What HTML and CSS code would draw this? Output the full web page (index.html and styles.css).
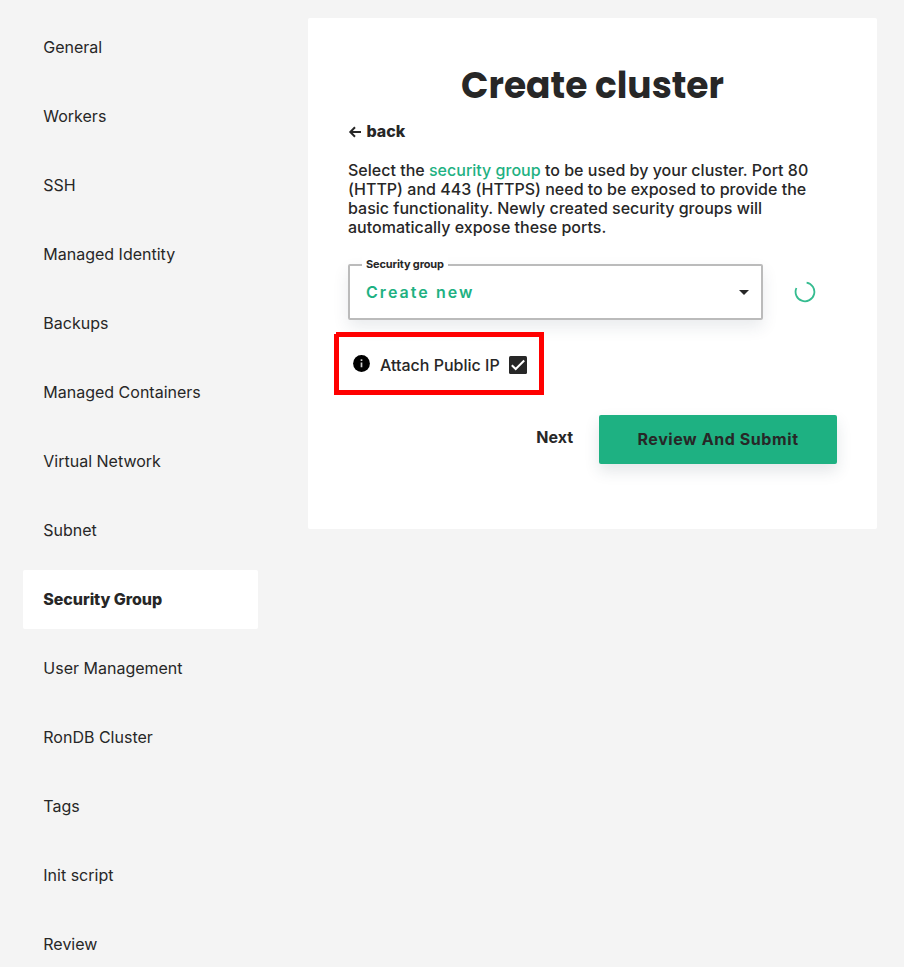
FILE: index.html
```html
<!DOCTYPE html>
<html lang="en">
<head>
<meta charset="utf-8">
<title>Create cluster</title>
<link rel="stylesheet" href="styles.css">
</head>
<body>
<div class="page">
  <nav class="steps">
    <a class="step">General</a>
    <a class="step">Workers</a>
    <a class="step">SSH</a>
    <a class="step">Managed Identity</a>
    <a class="step">Backups</a>
    <a class="step">Managed Containers</a>
    <a class="step">Virtual Network</a>
    <a class="step">Subnet</a>
    <a class="step active">Security Group</a>
    <a class="step">User Management</a>
    <a class="step">RonDB Cluster</a>
    <a class="step">Tags</a>
    <a class="step">Init script</a>
    <a class="step">Review</a>
  </nav>
  <main class="card">
    <h1 class="title">Create cluster</h1>
    <a class="back">
      <svg width="14" height="14" viewBox="0 0 14 14" fill="none" stroke="currentColor" stroke-width="2"><path d="M13 7H2.5M7 2.3L2.3 7L7 11.7"/></svg>
      <span>back</span>
    </a>
    <p class="intro">Select the <a class="link">security group</a> to be used by your cluster. Port 80<br>(HTTP) and 443 (HTTPS) need to be exposed to provide the<br>basic functionality. Newly created security groups will<br>automatically expose these ports.</p>
    <div class="field-row">
      <div class="select">
        <span class="label">Security group</span>
        <span class="value">Create new</span>
        <svg width="10" height="5" viewBox="0 0 10 5"><path d="M0 0H10L5 5Z" fill="#272727"/></svg>
      </div>
      <svg class="spinner" width="22" height="22" viewBox="0 0 22 22" fill="none" stroke="#35bc90" stroke-width="1.8"><path d="M12.6 1.6A9.4 9.4 0 1 1 2.4 7"/></svg>
    </div>
    <div class="public-ip">
      <svg class="info" width="17" height="17" viewBox="0 0 17 17"><circle cx="8.5" cy="8.5" r="8.4" fill="#000"/><path d="M8.5 4.3V6M8.5 7.4V12.3" stroke="#ccc" stroke-width="1.7"/></svg>
      <span>Attach Public IP</span>
      <svg class="check" width="18" height="18" viewBox="0 0 18 18"><rect width="18" height="18" rx="1.5" fill="#272727"/><path d="M2.8 9.2L6.7 13L15.2 4.5" fill="none" stroke="#fff" stroke-width="2"/></svg>
    </div>
    <div class="actions">
      <button class="next">Next</button>
      <button class="submit">Review And Submit</button>
    </div>
  </main>
</div>
</body>
</html>
```
FILE: styles.css
```css
* { box-sizing: border-box; }
body {
  margin: 0;
  height: 967px;
  overflow: hidden;
  background: #f4f4f4;
  color: #272727;
  font: 16px/19px Inter, sans-serif;
}
.page {
  display: flex;
  align-items: flex-start;
  gap: 50px;
  padding: 18px 27px 0 23px;
}
.steps {
  display: flex;
  flex-direction: column;
  gap: 10px;
  width: 235px;
}
.step {
  height: 59px;
  padding: 20px 20px 20px 20.3px;
  border-radius: 2px;
}
.step.active { background: #fff; font-weight: 800; letter-spacing: -.06px; }
.card {
  width: 569px;
  height: 511px;
  padding: 40px;
  border-radius: 2px;
  background: #fff;
}
.title {
  margin: 0;
  height: 54px;
  text-align: center;
  font: 700 36px/56px Poppins, Inter, sans-serif;
}
.back {
  display: flex;
  align-items: center;
  gap: 4.5px;
  height: 19px;
  margin-top: 10px;
  font-weight: 800;
}
.intro { margin: 20px 0 27px; font-weight: 500; white-space: nowrap; letter-spacing: .01px; }
.link { color: #1eb182; }
.field-row { display: flex; align-items: center; }
.select {
  position: relative;
  display: flex;
  align-items: center;
  justify-content: space-between;
  width: 415px;
  height: 56px;
  padding: 0 12px 0 16px;
  border: 2px solid #bbb;
  border-radius: 2px;
  box-shadow: 0 7px 16px rgba(39, 60, 77, .1);
}
.label {
  position: absolute;
  top: -9px;
  left: 12px;
  padding: 0 4px;
  background: #fff;
  font-size: 11px;
  line-height: 14px;
  font-weight: 700;
  letter-spacing: -.14px;
}
.value { color: #1eb182; font-weight: 600; letter-spacing: 2.05px; }
.spinner { margin-left: 31px; }
.public-ip {
  display: flex;
  align-items: center;
  width: 210px;
  height: 63px;
  margin: 12px 0 20px -14px;
  padding: 3px 0 0 14px;
  border: 5px solid #f00;
  font-weight: 500;
  clip-path: polygon(2px 0, 100% 0, 100% 100%, 0 100%, 0 2px, 2px 2px);
}
.info { margin: -3.5px 10px 0 0; }
.check { margin-left: 9px; }
.actions { display: flex; justify-content: flex-end; }
button {
  border: 0;
  padding: 0;
  background: none;
  color: #272727;
  font: 600 16px/19px Inter, sans-serif;
}
.next { height: 44px; margin-right: 26px; font-weight: 700; letter-spacing: 0; }
.submit {
  width: 238px;
  height: 49px;
  border-radius: 2px;
  background: #1eb182;
  box-shadow: 0 7px 15px rgba(39, 60, 77, .13);
  font-weight: 700;
  letter-spacing: .58px;
}
```
